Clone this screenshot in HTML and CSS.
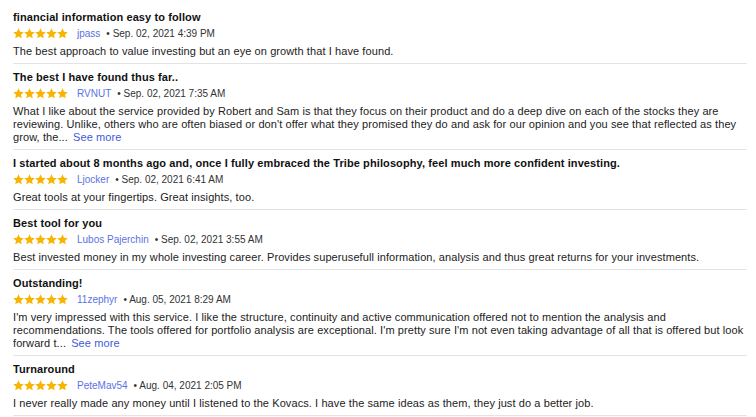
FILE: index.html
```html
<!DOCTYPE html>
<html>
<head>
<meta charset="utf-8">
<link rel="stylesheet" href="styles.css">
</head>
<body>
<svg width="0" height="0" class="defs">
  <defs>
    <symbol id="star" viewBox="0 0 24 24"><path d="M12 0.8l3.4 7.4 8.1.8-6.1 5.5 1.8 8L12 18.3l-7.2 4.2 1.8-8L.5 9l8.1-.8z"/></symbol>
  </defs>
</svg>
<div class="reviews">
  <div class="review">
    <div class="title">financial information easy to follow</div>
    <div class="meta">
      <span class="stars"><svg><use href="#star"/></svg><svg><use href="#star"/></svg><svg><use href="#star"/></svg><svg><use href="#star"/></svg><svg><use href="#star"/></svg></span>
      <span class="user">jpass</span><span class="date">• Sep. 02, 2021 4:39 PM</span>
    </div>
    <div class="body">The best approach to value investing but an eye on growth that I have found.</div>
  </div>
  <div class="review">
    <div class="title">The best I have found thus far..</div>
    <div class="meta">
      <span class="stars"><svg><use href="#star"/></svg><svg><use href="#star"/></svg><svg><use href="#star"/></svg><svg><use href="#star"/></svg><svg><use href="#star"/></svg></span>
      <span class="user">RVNUT</span><span class="date">• Sep. 02, 2021 7:35 AM</span>
    </div>
    <div class="body">What I like about the service provided by Robert and Sam is that they focus on their product and do a deep dive on each of the stocks they are reviewing. Unlike, others who are often biased or don't offer what they promised they do and ask for our opinion and you see that reflected as they grow, the... <a class="more" href="#">See more</a></div>
  </div>
  <div class="review">
    <div class="title">I started about 8 months ago and, once I fully embraced the Tribe philosophy, feel much more confident investing.</div>
    <div class="meta">
      <span class="stars"><svg><use href="#star"/></svg><svg><use href="#star"/></svg><svg><use href="#star"/></svg><svg><use href="#star"/></svg><svg><use href="#star"/></svg></span>
      <span class="user">Ljocker</span><span class="date">• Sep. 02, 2021 6:41 AM</span>
    </div>
    <div class="body">Great tools at your fingertips. Great insights, too.</div>
  </div>
  <div class="review">
    <div class="title">Best tool for you</div>
    <div class="meta">
      <span class="stars"><svg><use href="#star"/></svg><svg><use href="#star"/></svg><svg><use href="#star"/></svg><svg><use href="#star"/></svg><svg><use href="#star"/></svg></span>
      <span class="user">Lubos Pajerchin</span><span class="date">• Sep. 02, 2021 3:55 AM</span>
    </div>
    <div class="body">Best invested money in my whole investing career. Provides superusefull information, analysis and thus great returns for your investments.</div>
  </div>
  <div class="review">
    <div class="title">Outstanding!</div>
    <div class="meta">
      <span class="stars"><svg><use href="#star"/></svg><svg><use href="#star"/></svg><svg><use href="#star"/></svg><svg><use href="#star"/></svg><svg><use href="#star"/></svg></span>
      <span class="user">11zephyr</span><span class="date">• Aug. 05, 2021 8:29 AM</span>
    </div>
    <div class="body">I'm very impressed with this service. I like the structure, continuity and active communication offered not to mention the analysis and recommendations. The tools offered for portfolio analysis are exceptional. I'm pretty sure I'm not even taking advantage of all that is offered but look forward t... <a class="more" href="#">See more</a></div>
  </div>
  <div class="review">
    <div class="title">Turnaround</div>
    <div class="meta">
      <span class="stars"><svg><use href="#star"/></svg><svg><use href="#star"/></svg><svg><use href="#star"/></svg><svg><use href="#star"/></svg><svg><use href="#star"/></svg></span>
      <span class="user">PeteMav54</span><span class="date">• Aug. 04, 2021 2:05 PM</span>
    </div>
    <div class="body">I never really made any money until I listened to the Kovacs. I have the same ideas as them, they just do a better job.</div>
  </div>
</div>
</body>
</html>
```
FILE: styles.css
```css
html, body {
  margin: 0;
  padding: 0;
  background: #fff;
}
body {
  font-family: "Liberation Sans", Arial, sans-serif;
  color: #222;
}
.defs {
  position: absolute;
  width: 0;
  height: 0;
}
.reviews {
  width: 734px;
  margin-left: 13px;
  padding-top: 4px;
}
.review {
  padding: 6px 0 5px;
  border-bottom: 1px solid #e3e3e3;
}
.title {
  font-size: 11px;
  font-weight: bold;
  line-height: 14px;
  letter-spacing: 0.1px;
  color: #111;
}
.meta {
  display: flex;
  align-items: center;
  height: 16px;
  margin-top: 1px;
  font-size: 10px;
}
.stars {
  display: flex;
  gap: 0;
  margin-right: 9px;
}
.stars svg {
  width: 11px;
  height: 11px;
  fill: #f8b400;
}
.user {
  color: #5c72e4;
  margin-right: 6px;
}
.date {
  color: #333;
}
.body {
  margin-top: 4px;
  font-size: 11px;
  line-height: 13px;
  letter-spacing: 0.09px;
  color: #222;
}
.more {
  color: #3d5bd9;
  text-decoration: none;
  margin-left: 2px;
}
```
